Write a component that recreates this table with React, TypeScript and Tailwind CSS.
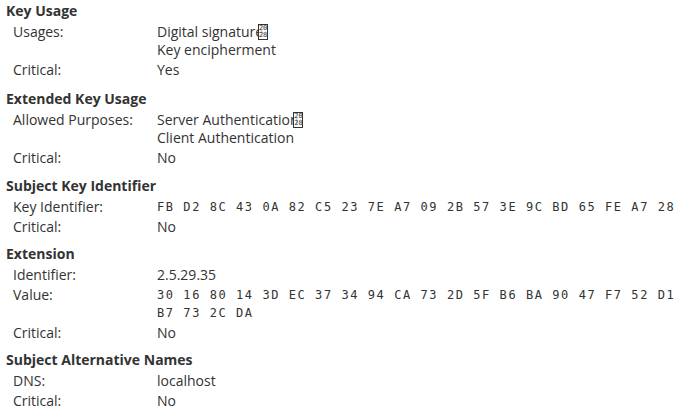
import React from "react"

type Row = { label: string; values: string[]; mono?: boolean; tofu?: boolean }
type Section = { title: string; gap: string; rows: Row[] }

const sections: Section[] = [
  {
    title: "Key Usage",
    gap: "",
    rows: [
      { label: "Usages:", values: ["Digital signature", "Key encipherment"], tofu: true },
      { label: "Critical:", values: ["Yes"] },
    ],
  },
  {
    title: "Extended Key Usage",
    gap: "mt-[10px]",
    rows: [
      { label: "Allowed Purposes:", values: ["Server Authentication", "Client Authentication"], tofu: true },
      { label: "Critical:", values: ["No"] },
    ],
  },
  {
    title: "Subject Key Identifier",
    gap: "mt-[9px]",
    rows: [
      { label: "Key Identifier:", values: ["FB D2 8C 43 0A 82 C5 23 7E A7 09 2B 57 3E 9C BD 65 FE A7 28"], mono: true },
      { label: "Critical:", values: ["No"] },
    ],
  },
  {
    title: "Extension",
    gap: "mt-[8px]",
    rows: [
      { label: "Identifier:", values: ["2.5.29.35"] },
      { label: "Value:", values: ["30 16 80 14 3D EC 37 34 94 CA 73 2D 5F B6 BA 90 47 F7 52 D1", "B7 73 2C DA"], mono: true },
      { label: "Critical:", values: ["No"] },
    ],
  },
  {
    title: "Subject Alternative Names",
    gap: "mt-[8px]",
    rows: [
      { label: "DNS:", values: ["localhost"] },
      { label: "Critical:", values: ["No"] },
    ],
  },
]

// the missing-glyph box for U+2028 that the line separator renders as
function Tofu() {
  return (
    <span className="relative inline-flex flex-col justify-center items-center align-middle ml-[-5px] w-[10px] h-[16px] border border-[#333333] bg-white/70 text-[7px] leading-[7px] font-['DejaVu_Sans_Mono',monospace] text-[#333333] -translate-y-[1px]">
      <span>20</span>
      <span>28</span>
    </span>
  )
}

export default function App() {
  return (
    <div className="w-[690px] h-[412px] bg-white text-[#333333] font-['Open_Sans',sans-serif] text-[14px] pt-px overflow-hidden">
      {sections.map((s) => (
        <div key={s.title} className={s.gap}>
          <div className="pl-[6px] h-[20px] leading-[20px] font-bold">{s.title}</div>
          <div className="mt-[2px] flex flex-col gap-[2px]">
            {s.rows.map((r) => (
              <div key={r.label} className="flex">
                <div className="w-[157px] pl-[13px] leading-[18px]">{r.label}</div>
                <div
                  className={
                    r.mono
                      ? "font-['DejaVu_Sans_Mono',monospace] text-[12px] tracking-[1.56px] leading-[18px]"
                      : "leading-[18px]"
                  }
                >
                  {r.values.map((v, j) => (
                    <div key={j} className="h-[18px] whitespace-nowrap">
                      {v}
                      {r.tofu && j === 0 ? <Tofu /> : null}
                    </div>
                  ))}
                </div>
              </div>
            ))}
          </div>
        </div>
      ))}
    </div>
  )
}
